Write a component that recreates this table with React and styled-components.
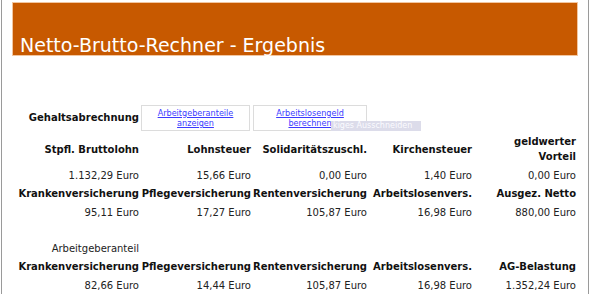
import styled, { createGlobalStyle } from "styled-components";

const GlobalStyle = createGlobalStyle`
  html, body {
    margin: 0;
    padding: 0;
    background: #fff;
  }
  body {
    font-family: "DejaVu Sans", Verdana, sans-serif;
  }
`;

const Page = styled.div`
  box-sizing: border-box;
  width: 588px;
  min-height: 294px;
  margin-left: 1px;
  padding: 2px 10px 0;
  border-left: 1px solid #9a9a9a;
  border-right: 1px solid #9a9a9a;
`;

const Banner = styled.header`
  box-sizing: border-box;
  height: 54px;
  display: flex;
  align-items: flex-end;
  padding: 0 0 0 7px;
  background: #c75900;
  border: 1px solid #f2c6a0;
`;

const Title = styled.h1`
  margin: 0;
  font-family: "DejaVu Sans", Verdana, sans-serif;
  font-weight: normal;
  font-size: 19px;
  line-height: 20px;
  color: #fff;
`;

const Sheet = styled.div`
  margin-top: 48px;
  display: grid;
  grid-template-columns: 128px 112px 116px 105px 104px;
  grid-template-rows: 27px 32px 16px 17px 16px 16px 16px 17px 16px;
  row-gap: 2px;
`;

const Cell = styled.div`
  display: flex;
  align-items: center;
  justify-content: flex-end;
  padding-right: 1px;
  text-align: right;
  font-size: 10px;
  line-height: 15px;
  font-weight: ${(p) => (p.$head ? "bold" : "normal")};
  color: ${(p) => (p.$head ? "#111" : "#222")};
  white-space: nowrap;
`;

const Spacer = styled.div`
  grid-column: 1 / -1;
`;

const LinkBox = styled.div`
  position: relative;
  box-sizing: border-box;
  margin: 1px ${(p) => p.$right}px 0 1px;
  display: flex;
  align-items: center;
  justify-content: center;
  border: 1px solid #dcdcdc;
  background: #fff;
  text-align: center;
`;

const Link = styled.a`
  font-family: "DejaVu Sans Condensed", "DejaVu Sans", sans-serif;
  font-size: 9px;
  line-height: 10px;
  color: #3b3bff;
  text-decoration: underline;
  cursor: pointer;
`;

const Hint = styled.span`
  position: absolute;
  left: 77px;
  top: 15px;
  width: 90px;
  height: 10px;
  padding-left: 2px;
  box-sizing: border-box;
  background: #dcdcea;
  color: #fbfbff;
  font-family: "DejaVu Sans", Verdana, sans-serif;
  font-size: 8px;
  line-height: 10px;
  text-align: left;
  white-space: nowrap;
  overflow: hidden;
`;

const rows = [
  {
    head: ["Stpfl. Bruttolohn", "Lohnsteuer", "Solidaritätszuschl.", "Kirchensteuer", "geldwerter\nVorteil"],
    values: ["1.132,29 Euro", "15,66 Euro", "0,00 Euro", "1,40 Euro", "0,00 Euro"],
  },
  {
    head: ["Krankenversicherung", "Pflegeversicherung", "Rentenversicherung", "Arbeitslosenvers.", "Ausgez. Netto"],
    values: ["95,11 Euro", "17,27 Euro", "105,87 Euro", "16,98 Euro", "880,00 Euro"],
  },
];

const employer = {
  head: ["Krankenversicherung", "Pflegeversicherung", "Rentenversicherung", "Arbeitslosenvers.", "AG-Belastung"],
  values: ["82,66 Euro", "14,44 Euro", "105,87 Euro", "16,98 Euro", "1.352,24 Euro"],
};

const Label = ({ text }) => (
  <Cell $head>
    <span>
      {text.split("\n").map((line, i) => (
        <span key={i}>
          {i > 0 && <br />}
          {line}
        </span>
      ))}
    </span>
  </Cell>
);

const Block = ({ head, values }) => (
  <>
    {head.map((h) => (
      <Label key={h} text={h} />
    ))}
    {values.map((v, i) => (
      <Cell key={i}>{v}</Cell>
    ))}
  </>
);

export default function App() {
  return (
    <>
      <GlobalStyle />
      <Page>
        <Banner>
          <Title>Netto-Brutto-Rechner - Ergebnis</Title>
        </Banner>
        <Sheet>
          <Cell $head>Gehaltsabrechnung</Cell>
          <LinkBox $right={2}>
            <Link>
              Arbeitgeberanteile
              <br />
              anzeigen
            </Link>
          </LinkBox>
          <LinkBox $right={1}>
            <Link>
              Arbeitslosengeld
              <br />
              berechnen
            </Link>
            <Hint>kiges Ausschneiden</Hint>
          </LinkBox>
          <div />
          <div />

          {rows.map((r, i) => (
            <Block key={i} {...r} />
          ))}

          <Spacer />

          <Cell>Arbeitgeberanteil</Cell>
          <div />
          <div />
          <div />
          <div />

          <Block {...employer} />
        </Sheet>
      </Page>
    </>
  );
}
